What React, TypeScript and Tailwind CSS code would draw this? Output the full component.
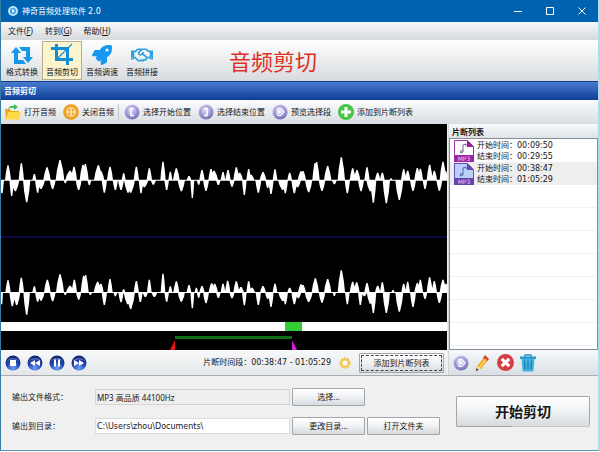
import { ReactNode } from "react";
import { FaRegHandshake, FaRocket } from "react-icons/fa";

type Peak = [x: number, height: number, half: number];

// positive heights go up, negative ones go down
const leftChannel: Peak[] = [
  [21, 44, 9], [61, 50, 8], [100, 18, 6], [138, 38, 11], [177, 60, 13], [207, 28, 14], [219, 40, 9],
  [246, 46, 10], [253, 48, 10], [292, 44, 13], [300, 26, 10], [327, 40, 9], [368, 20, 6], [406, 40, 8],
  [445, 35, 8], [486, 55, 8], [508, 25, 6], [526, 35, 10], [564, 12, 7], [603, 30, 8], [630, 33, 8],
  [639, 28, 12], [666, 24, 7], [681, 30, 8], [706, 38, 9], [716, 22, 10], [743, 33, 7], [750, 16, 10],
  [786, 24, 10], [822, 32, 7], [866, 22, 7], [900, 26, 10], [906, 27, 9], [942, 50, 8], [947, 54, 9],
  [980, 42, 11], [1021, 68, 11], [1055, 35, 9], [1068, 30, 10], [1098, 38, 8], [1130, 22, 8],
  [1144, 22, 7], [1170, 5, 4], [1208, 32, 8], [1220, 28, 8], [1249, 36, 9], [1258, 34, 8], [1286, 46, 9],
  [1300, 28, 8], [1326, 55, 10], [1334, 26, 8],
  [3, -40, 6], [32, -48, 7], [43, -34, 12], [77, -67, 11], [110, -38, 8], [120, -27, 12], [155, -27, 9],
  [193, -10, 5], [233, -30, 9], [265, -15, 6], [310, -38, 8], [343, -30, 8], [360, -30, 9], [381, -38, 12],
  [389, -38, 13], [420, -40, 7], [430, -22, 12], [457, -14, 8], [497, -30, 7], [541, -34, 11],
  [574, -54, 6], [593, -14, 6], [615, -33, 9], [652, -15, 7], [693, -20, 8], [730, -45, 7], [772, -38, 9],
  [800, -24, 7], [810, -42, 8], [845, -30, 14], [853, -40, 8], [880, -40, 9], [890, -22, 10],
  [923, -37, 11], [963, -33, 10], [1000, -13, 7], [1039, -40, 8], [1080, -34, 9], [1108, -34, 12],
  [1117, -68, 9], [1156, -70, 11], [1195, -60, 12], [1236, -33, 9], [1272, -27, 7], [1315, -32, 9],
];

const rightChannel: Peak[] = [
  [21, 36, 8], [61, 44, 8], [100, 18, 6], [139, 38, 10], [177, 54, 12], [207, 20, 12], [220, 38, 8],
  [248, 50, 9], [254, 52, 9], [290, 32, 12], [300, 26, 8], [327, 40, 8], [368, 9, 5], [406, 34, 8],
  [445, 38, 7], [486, 56, 7], [508, 18, 6], [526, 33, 9], [564, 22, 7], [586, 14, 5], [603, 19, 8],
  [632, 27, 9], [641, 26, 10], [666, 26, 7], [680, 35, 8], [706, 33, 9], [720, 16, 9], [743, 33, 7],
  [753, 14, 9], [786, 19, 9], [822, 26, 7], [866, 14, 7], [900, 24, 9], [906, 22, 9], [943, 42, 11],
  [980, 40, 11], [1021, 66, 11], [1055, 32, 9], [1067, 30, 9], [1098, 28, 8], [1130, 20, 8],
  [1144, 30, 7], [1176, 7, 5], [1208, 26, 7], [1220, 32, 7], [1249, 28, 9], [1258, 38, 8], [1286, 45, 9],
  [1300, 34, 8], [1326, 38, 10], [1335, 26, 7],
  [2, -36, 4], [34, -42, 9], [47, -38, 11], [77, -67, 10], [110, -28, 8], [120, -25, 11], [155, -27, 9],
  [193, -8, 5], [233, -22, 8], [268, -8, 5], [310, -38, 8], [343, -12, 6], [360, -30, 8], [380, -36, 12],
  [389, -50, 13], [418, -29, 7], [433, -14, 8], [460, -14, 9], [497, -28, 7], [541, -28, 11],
  [574, -48, 6], [593, -16, 6], [615, -33, 9], [652, -17, 7], [693, -18, 8], [730, -39, 7], [772, -38, 8],
  [800, -20, 8], [810, -44, 8], [845, -26, 13], [853, -36, 8], [880, -36, 9], [892, -18, 9],
  [923, -29, 12], [963, -31, 10], [1000, -11, 5], [1039, -36, 7], [1078, -38, 7], [1090, -12, 8],
  [1108, -34, 11], [1117, -62, 9], [1156, -62, 11], [1195, -58, 12], [1236, -44, 9], [1272, -20, 7],
  [1315, -32, 9],
];

const drawPeaks = (peaks: Peak[], base: number) =>
  peaks
    .map(([x, h, half]) => {
      const mid = base - h * 0.5;
      return `M${x - half} ${base}L${x - half * 0.7} ${mid}L${x - 2} ${base - h}H${x + 2}L${x + half * 0.7} ${mid}L${x + half} ${base}Z`;
    })
    .join("");

const tools: { name: string; icon: ReactNode }[] = [
  {
    name: "格式转换",
    icon: (
      <svg viewBox="0 0 22 20" className="h-5 w-[22px]" fill="#1698e8">
        <path d="M5 2l5 6H7v7h5l3 4H3V8H0z" />
        <path d="M8 2h11v10h3l-5 6-5-6h3V6h-4z" />
      </svg>
    ),
  },
  {
    name: "音频剪切",
    icon: (
      <svg viewBox="0 0 22 22" className="h-[22px] w-[22px]" fill="none" stroke="#128ed4" strokeWidth="3">
        <path d="M5.500 1v15.500H22M0 5.500h16.500V22" />
        <path d="M6 16L21 1" strokeWidth="1.300" />
      </svg>
    ),
  },
  { name: "音频调速", icon: <FaRocket className="h-5 w-5 text-[#1698f0]" /> },
  { name: "音频拼接", icon: <FaRegHandshake className="h-5 w-[22px] text-[#2fa0de]" /> },
];

const Orb = ({ children, color = "violet" }: { children: ReactNode; color?: "violet" | "blue" }) => (
  <svg viewBox="0 0 16 16" className="size-4 shrink-0">
    <defs>
      <radialGradient id="violet" cx=".4" cy=".25" r=".8">
        <stop offset="0" stopColor="#e4e0fa" />
        <stop offset=".6" stopColor="#a7a1dc" />
        <stop offset="1" stopColor="#6b65a8" />
      </radialGradient>
      <radialGradient id="blue" cx=".5" cy=".85" r=".9">
        <stop offset="0" stopColor="#6fa0ff" />
        <stop offset=".5" stopColor="#2145ad" />
        <stop offset="1" stopColor="#0c1c62" />
      </radialGradient>
    </defs>
    <circle cx="8" cy="8" r="7.500" fill={color === "violet" ? "url(#violet)" : "url(#blue)"} />
    {color === "violet" && <circle cx="8" cy="8" r="5.500" fill="none" stroke="#8982c4" strokeWidth=".8" />}
    {color === "blue" && <path d="M2 6a6.500 5 0 0 1 12 0q-6-3-12 0z" fill="#fff" opacity=".25" />}
    {children}
  </svg>
);

const PlayOrb = () => (
  <Orb>
    <path d="M6 4.500h2.500L12 8l-3.500 3.500H6z" fill="none" stroke="#fff" strokeWidth="1.200" />
    <path d="M7 6l3 2-3 2z" fill="#fff" />
  </Orb>
);

const actions: { name: string; icon: ReactNode; line?: boolean }[] = [
  {
    name: "打开音频",
    icon: (
      <svg viewBox="0 0 16 16" className="size-4 shrink-0">
        <path d="M0 5h5l1 2h8v8H1z" fill="#e9ac1d" />
        <path d="M3 8h13l-2 7.500H1z" fill="#ffd943" />
        <path d="M3 5q2-4 6-3V0l4 3-4 3V4Q6 3 3 5z" fill="#49b95c" />
      </svg>
    ),
  },
  {
    name: "关闭音频",
    line: true,
    icon: (
      <svg viewBox="0 0 16 16" className="size-4 shrink-0">
        <circle cx="8" cy="8" r="7.800" fill="#ee981e" />
        <circle cx="8" cy="8" r="6" fill="#f8b63d" />
        <circle cx="8" cy="8" r="4.300" fill="#ffe3a0" />
        <path d="M5.500 5.500l1.500 1.500M10.500 5.500L9 7M5.500 10.500L7 9M10.500 10.500L9 9" stroke="#d67e0f" strokeWidth="1.200" />
      </svg>
    ),
  },
  {
    name: "选择开始位置",
    icon: (
      <Orb>
        <path d="M10 4.500H7v7h3" fill="none" stroke="#fff" strokeWidth="1.600" />
      </Orb>
    ),
  },
  {
    name: "选择结束位置",
    icon: (
      <Orb>
        <path d="M6 4.500h3v7H6" fill="none" stroke="#fff" strokeWidth="1.600" />
      </Orb>
    ),
  },
  { name: "预览选择段", icon: <PlayOrb /> },
  {
    name: "添加到片断列表",
    icon: (
      <svg viewBox="0 0 16 16" className="size-4 shrink-0">
        <circle cx="8" cy="8" r="8" fill="#48c546" />
        <path d="M8 3v10M3 8h10" stroke="#fff" strokeWidth="3" />
      </svg>
    ),
  },
];

const players: { name: string; path: string }[] = [
  { name: "停止", path: "M5 5h6v6H5z" },
  { name: "后退", path: "M8 5v6L3 8zM13 5v6L8 8z" },
  { name: "暂停", path: "M5 4.500h2v7H5zM9 4.500h2v7H9z" },
  { name: "前进", path: "M3 5v6l5-3zM8 5v6l5-3z" },
];

const clips = [
  { start: "00:09:50", end: "00:29:55", active: false },
  { start: "00:38:47", end: "01:05:29", active: true },
];

const Mp3Icon = ({ active }: { active: boolean }) => (
  <svg viewBox="0 0 20 22" className="h-[22px] w-5 shrink-0">
    <path d="M.5.500h13l6 6v15H.5z" fill={active ? "#b9d0fa" : "#fff"} stroke={active ? "#6750b4" : "#a02ea8"} />
    <path d="M13 0l7 7h-7z" fill={active ? "#6547ae" : "#97249f"} />
    <path d="M0 15h20v7H0z" fill={active ? "#6642ac" : "#9d25a5"} />
    <path d="M9 11V5l3-1v2M9 11q-3-1-3 1t3 0z" fill="none" stroke={active ? "#5666ae" : "#77609a"} />
    <text x="10" y="21" textAnchor="middle" fontSize="6" fill="#e8c8f0" fontFamily="DejaVu Sans, sans-serif">
      MP3
    </text>
  </svg>
);

const Time = ({ children }: { children: ReactNode }) => (
  <span className="font-['DejaVu_Sans',sans-serif]">{children}</span>
);

const buttonStyle =
  "rounded-[1px] border border-[#a3a6a9] bg-gradient-to-b from-white via-[#f0f2f4] to-[#d5dade] text-center";

const App = () => {
  return (
    <main className="border-l border-r-2 border-b border-l-[#397ba3] border-r-[#a9dcf5] border-b-[#5894b7] bg-[#f0f0f0] font-['Noto_Sans','Noto_Sans_CJK_SC',sans-serif] text-[8px] leading-[10px] text-[#161616]">
      <header className="flex h-[22px] items-center bg-[#0063b1] pl-[7px] text-white">
        <svg viewBox="0 0 10 10" className="size-[10px]">
          <circle cx="5" cy="5" r="5" fill="#b9e4ff" />
          <circle cx="5" cy="5" r="3" fill="#329ce9" />
          <path d="M4 3v4l3-2z" fill="#fff" />
        </svg>
        <h1 className="ml-1 flex-1">神奇音频处理软件 <Time>2.0</Time></h1>
        <div className="flex">
          <button aria-label="最小化" className="flex w-8 justify-center">
            <svg viewBox="0 0 8 8" className="size-2" stroke="#fff" fill="none"><path d="M0 4.500h8" /></svg>
          </button>
          <button aria-label="最大化" className="flex w-8 justify-center">
            <svg viewBox="0 0 8 8" className="size-2" stroke="#fff" fill="none"><path d="M.5.500h7v7h-7z" /></svg>
          </button>
          <button aria-label="关闭" className="flex w-8 justify-center">
            <svg viewBox="0 0 8 8" className="size-2" stroke="#fff" fill="none"><path d="M.5.500l7 7M7.500.500l-7 7" /></svg>
          </button>
        </div>
      </header>

      <nav className="flex h-[18px] items-center gap-3 bg-gradient-to-b from-[#f7f8fa] to-[#d6dadd] pl-[7px]">
        <button>文件(<u>F</u>)</button>
        <button>转到(<u>G</u>)</button>
        <button>帮助(<u>H</u>)</button>
      </nav>

      <div className="flex h-[41px] items-center bg-gradient-to-b from-white to-[#d7dbde] pl-px">
        {tools.map((tool, i) => (
          <button
            key={tool.name}
            className={
              i === 1
                ? "flex h-[39px] w-10 flex-col items-center justify-between border border-[#b6ad8e] bg-[#fcf3cf] pt-px pb-0.5"
                : "flex h-[39px] w-10 flex-col items-center justify-between pt-1 pb-[3px]"
            }
          >
            {tool.icon}
            <span className="whitespace-nowrap">{tool.name}</span>
          </button>
        ))}
        <h2 className="ml-[67px] text-[22px] leading-6 text-[#df3027]">音频剪切</h2>
      </div>

      <h3 className="h-[19px] border-t border-[#123c83] bg-gradient-to-b from-[#477bd0] to-[#0d3e96] pl-[3px] font-bold leading-[17px] text-white">
        音频剪切
      </h3>

      <div className="flex h-6 items-center gap-1 bg-gradient-to-b from-[#fbfcfd] to-[#d9dee2] pl-1">
        {actions.map((action) => (
          <div key={action.name} className="flex items-center">
            <button className="flex items-center gap-[3px] pr-[3px] whitespace-nowrap">
              {action.icon}
              {action.name}
            </button>
            {action.line && <span className="mx-px h-4 w-px bg-[#bfc3c7]" />}
          </div>
        ))}
      </div>

      <div className="flex">
        <section className="flex min-w-0 flex-1 flex-col">
          <div className="bg-black">
            <svg viewBox="0 0 1338 594" preserveAspectRatio="none" className="block h-[198px] w-full">
              <path d="M0 339h1338" stroke="#0b0b58" strokeWidth="4" />
              <g fill="#fff">
                <path d={drawPeaks(leftChannel, 168)} />
                <path d="M0 167h1338v3H0z" />
                <path d={drawPeaks(rightChannel, 505)} />
                <path d="M0 504h1338v3H0z" />
              </g>
            </svg>
            <svg viewBox="0 0 446 28" preserveAspectRatio="none" className="block h-7 w-full">
              <path d="M0 0h446v9H0z" fill="#fff" />
              <path d="M284 0h17v9h-17z" fill="#32cd35" />
              <path d="M174 14h117v3H174z" fill="#126d18" />
              <path d="M174 18v10h-5z" fill="#e5161c" />
              <path d="M291 18v10h5z" fill="#d51fd8" />
            </svg>
          </div>
          <div className="flex h-[25px] items-center gap-1.5 bg-gradient-to-b from-[#f7f8f9] to-[#e5e8ea] pl-1">
            {players.map((player) => (
              <button key={player.name} aria-label={player.name}>
                <Orb color="blue">
                  <path d={player.path} fill="#fff" />
                </Orb>
              </button>
            ))}
            <div className="ml-auto flex items-center pr-[3px]">
              <span className="whitespace-nowrap">
                片断时间段：<Time>00:38:47 - 01:05:29</Time>
              </span>
              <svg viewBox="0 0 12 12" className="mx-2 size-3">
                <circle cx="6" cy="6" r="4.800" fill="#fff" stroke="#eebb35" strokeWidth="1.600" strokeDasharray="2 1" />
                <circle cx="6" cy="6" r="3.500" fill="#fff" stroke="#f3ca55" strokeWidth="2" />
              </svg>
              <button className={`h-5 w-[85px] p-px ${buttonStyle}`}>
                <span className="flex h-full items-center justify-center border border-dashed border-[#454545]">
                  添加到片断列表
                </span>
              </button>
            </div>
          </div>
        </section>

        <aside className="ml-px flex w-[150px] flex-col border-l border-[#d2d6d9]">
          <h3 className="h-[14px] bg-gradient-to-b from-[#f8f9fa] to-[#dfe3e6] pl-[3px] font-bold leading-[15px]">
            片断列表
          </h3>
          <ul className="flex-1 border border-[#848e9b] bg-white">
            {clips.map((clip) => (
              <li
                key={clip.start}
                className={
                  clip.active
                    ? "flex h-[23px] items-center gap-[3px] bg-[#eeeeef] pl-1"
                    : "flex h-[23px] items-center gap-[3px] pl-1"
                }
              >
                <Mp3Icon active={clip.active} />
                <div>
                  <p>开始时间：<Time>{clip.start}</Time></p>
                  <p>结束时间：<Time>{clip.end}</Time></p>
                </div>
              </li>
            ))}
            {[0, 1, 2, 3, 4, 5, 6].map((row) => (
              <li key={row} className="h-[23px] border-b border-[#f1f1f1]" />
            ))}
          </ul>
          <div className="flex h-[25px] items-center gap-1.5 bg-gradient-to-b from-[#f7f9fa] to-[#d9dfe3] pl-1">
            <button aria-label="播放">
              <PlayOrb />
            </button>
            <button aria-label="编辑">
              <svg viewBox="0 0 16 18" className="h-[18px] w-4">
                <path d="M1 17l1-5 8-10 4 3-8 10z" fill="#f3b02b" />
                <path d="M8 4l4 3 2-2-4-4z" fill="#d84635" />
                <path d="M4 14l7-9" stroke="#fff0a0" />
                <path d="M1 17l1-5 4 3z" fill="#f5ddb0" />
                <path d="M1 17l.5-3 2 2z" fill="#222" />
              </svg>
            </button>
            <button aria-label="删除">
              <svg viewBox="0 0 16 16" className="size-[17px]">
                <circle cx="8" cy="8" r="8" fill="#d33e43" />
                <path d="M4.500 4.500l7 7M11.500 4.500l-7 7" stroke="#fff" strokeWidth="3" />
              </svg>
            </button>
            <button aria-label="清空">
              <svg viewBox="0 0 16 18" className="h-[18px] w-4">
                <path d="M5 3V1h6v2" fill="none" stroke="#2791c5" strokeWidth="1.500" />
                <path d="M0 2.500h16V5H0z" fill="#2b9acb" />
                <path d="M1.500 5h13l-1 12.500h-11z" fill="#43b4df" />
                <path d="M4.500 6.500l.5 9M8 6.500v9M11.500 6.500l-.5 9" stroke="#1b7fae" strokeWidth="1.300" />
              </svg>
            </button>
          </div>
        </aside>
      </div>

      <form
        className="flex items-center border-t border-[#a9adb0] pt-3 pr-2 pb-[15px] pl-[11px]"
        onSubmit={(e) => e.preventDefault()}
      >
        <div className="grid flex-1 grid-cols-[83px_1fr_73px_75px] items-center gap-y-[11px]">
          <label htmlFor="format">输出文件格式：</label>
          <input
            id="format"
            readOnly
            value="MP3 高品质 44100Hz"
            className="mr-0.5 h-4 min-w-0 border border-[#d3d3d3] bg-[#eeeeee] px-px"
          />
          <button type="button" className={`h-[18px] ${buttonStyle}`}>选择...</button>
          <span />
          <label htmlFor="folder">输出到目录：</label>
          <input
            id="folder"
            defaultValue="C:\Users\zhou\Documents\"
            className="mr-0.5 h-4 min-w-0 border border-[#dcdcdc] bg-white px-px font-['DejaVu_Sans',sans-serif]"
          />
          <button type="button" className={`h-[18px] ${buttonStyle}`}>更改目录...</button>
          <button type="button" className={`ml-0.5 h-[18px] ${buttonStyle}`}>打开文件夹</button>
        </div>
        <div className="relative ml-4">
          <button className={`h-[31px] w-[134px] text-[14px] leading-4 font-bold ${buttonStyle}`}>开始剪切</button>
          {/* soft shine on the lower corner */}
          <div className="pointer-events-none absolute right-0 -bottom-1 h-2 w-[78px] bg-gradient-to-t from-[#f0f0f0] to-transparent" />
        </div>
      </form>
    </main>
  );
};

export default App;
